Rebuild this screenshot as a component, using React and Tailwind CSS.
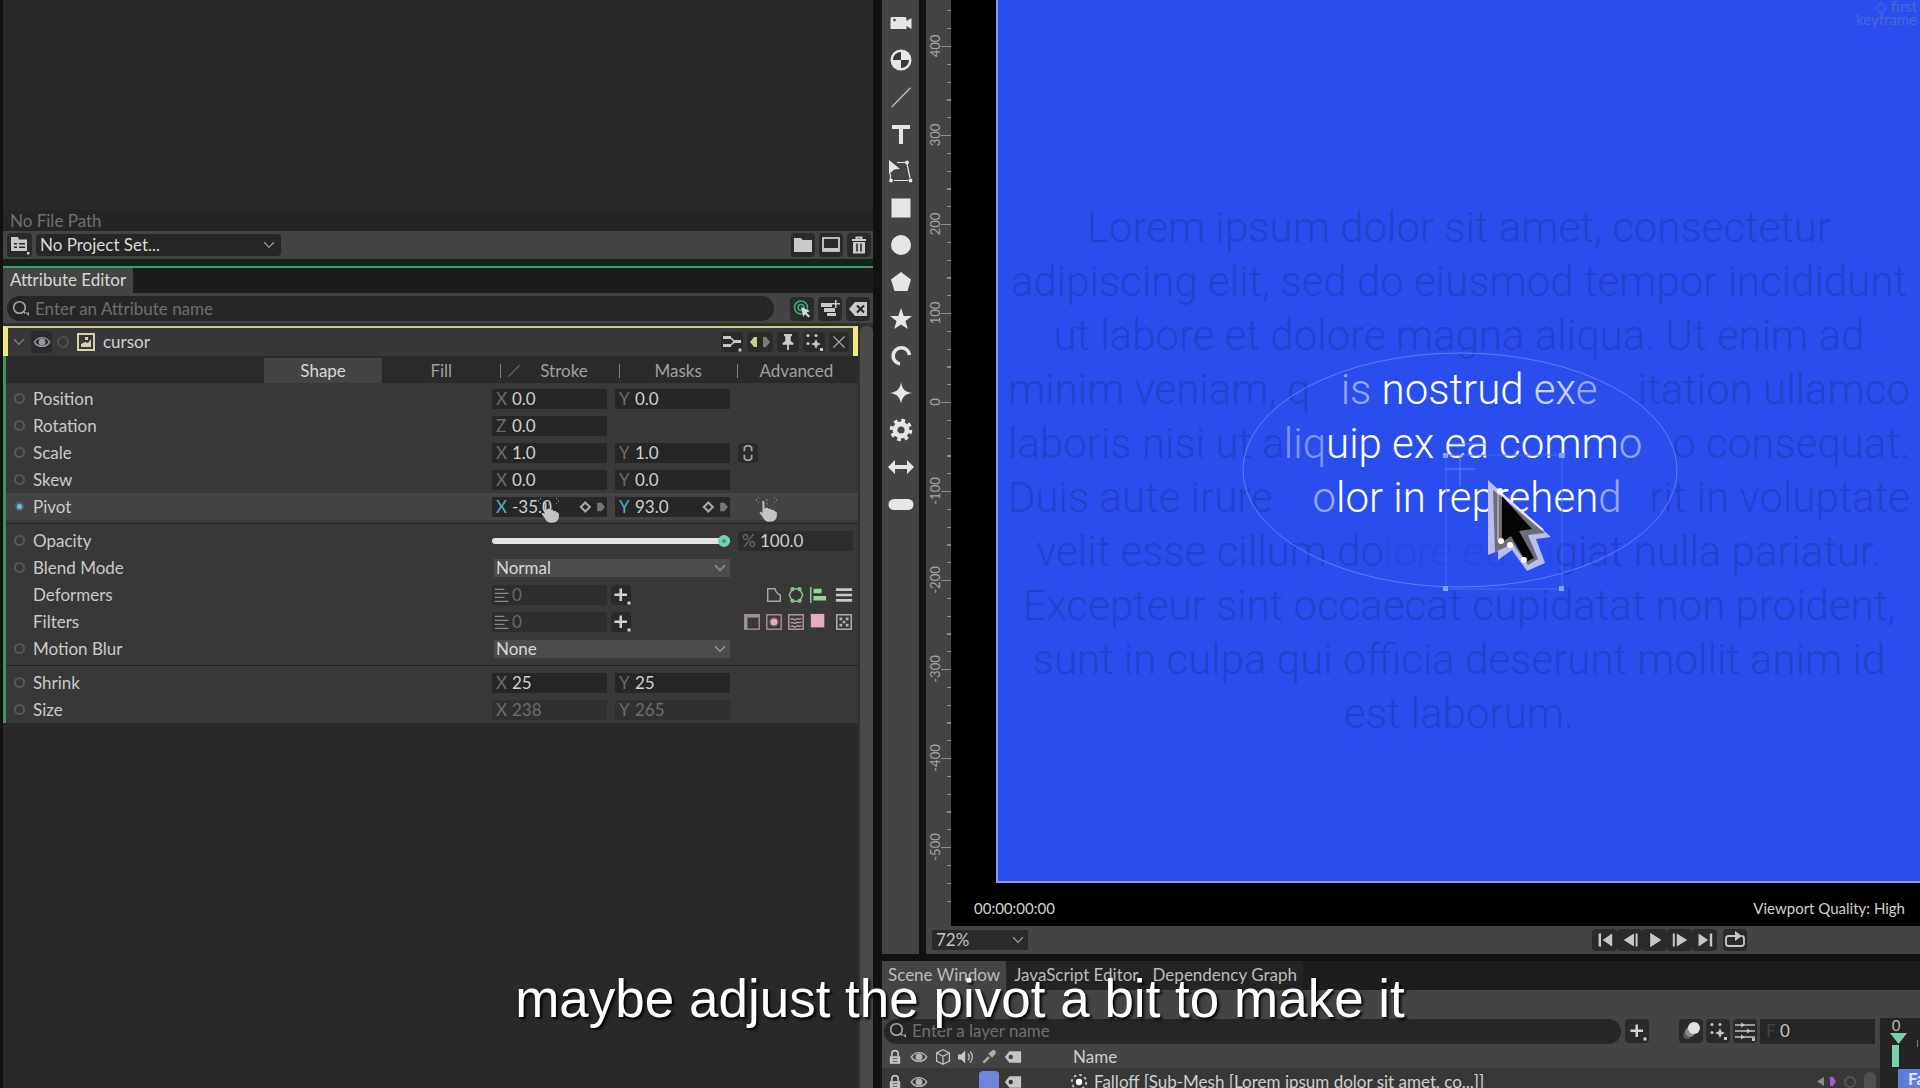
import clsx from 'clsx';

const FONT = "font-['Lato','Open_Sans',sans-serif]";

const Icon = ({ size = 20, className, children }) => (
  <svg
    width={size}
    height={size}
    viewBox="0 0 20 20"
    fill="none"
    stroke="currentColor"
    strokeWidth="1.6"
    className={clsx('shrink-0', className)}
    aria-hidden="true"
  >
    {children}
  </svg>
);

const Solid = ({ children, ...rest }) => (
  <Icon {...rest}>
    <g fill="currentColor" stroke="none">{children}</g>
  </Icon>
);

const Chevron = ({ className }) => (
  <Icon size={16} className={className}>
    <path d="M4 6.5l6 6.5 6-6.5" />
  </Icon>
);

const SearchIcon = () => (
  <Icon size={20} className="text-[#a8a8a8]">
    <circle cx="8.5" cy="8.5" r="5.8" />
    <path d="M12.8 13l1.5 1.5" />
    <path d="M14.5 13.5h3.5v3.5z" fill="currentColor" stroke="none" />
  </Icon>
);

const EyeIcon = ({ className = 'text-[#9a9a9a]' }) => (
  <Icon size={18} className={className}>
    <path d="M1.5 10c4-6.5 13-6.5 17 0-4 6.500-13 6.500-17 0z" />
    <circle cx="10" cy="10" r="3" fill="currentColor" />
  </Icon>
);

const LockIcon = () => (
  <Icon size={16} className="text-[#c6c6c6]">
    <path d="M6 9V6a4 4 0 0 1 8 0v3" strokeWidth="2" />
    <rect x="3.500" y="9" width="13" height="9.500" fill="currentColor" stroke="none" />
    <path d="M7 12h6M7 15.500h6" stroke="#444" strokeWidth="1" />
  </Icon>
);

const TagIcon = () => (
  <Solid size={18} className="text-[#c6c6c6]">
    <path fillRule="evenodd" d="M1 10l5-6.500h13v13H6zM7.500 7.500a2.500 2.500 0 1 0 0 5 2.500 2.500 0 0 0 0-5z" />
  </Solid>
);

const DotsIcon = () => (
  <Solid size={20} className="text-[#c6c6c6]">
    <circle cx="4" cy="3.500" r="1.500" />
    <circle cx="12" cy="3.500" r="1.500" />
    <circle cx="4" cy="11.500" r="1.500" />
    <path d="M12 7l1.500 3.500L17 12l-3.500 1.500L12 17l-1.500-3.500L7 12l3.500-1.500z" />
    <path d="M16 16h3v3h-3z" />
  </Solid>
);

const PlusIcon = () => (
  <Solid size={20} className="text-[#d2d2d2]">
    <path d="M8.500 3.500h2.500v5h5V11h-5v5H8.500v-5h-5V8.500h5z" />
    <path d="M16.500 16.500h3v3h-3z" />
  </Solid>
);

const HandIcon = ({ className }) => (
  <svg width="26" height="26" viewBox="0 0 26 26" className={clsx('shrink-0', className)} aria-hidden="true">
    <path d="M9 5c1 0 1.500.6 1.500 1.500V13l1.500-1.500 2 .5.5 1 2-.5 1 1.500 2-.3 1 1.500 2 .5.5 2c0 5-2 8-7 8-4 0-6-2-7.500-5l-3-4c.8-1.500 2-1 3 .5V6.500C7.500 5.600 8 5 9 5z" fill="#c4c4c4" />
    <path d="M5 1L2 4l3 3M20 1l3 3-3 3M13 3v6" fill="none" stroke="#8c8c8c" strokeDasharray="2 1.500" />
  </svg>
);

const IconButton = ({ label, className = 'w-6 h-6', children }) => (
  <button
    type="button"
    aria-label={label}
    className={clsx('flex items-center justify-center shrink-0 rounded-sm bg-[#2a2a2a]', className)}
  >
    {children}
  </button>
);

/* ---------- attribute editor ---------- */

const NumberField = ({ name, axis, value, tone = 'text-[#d0d0d0]', axisTone = 'text-[#6c6c6c]', bg = 'bg-[#262626]', keyed, children }) => (
  <label className={clsx('relative flex items-center w-[115px] h-5 shrink-0 pl-1', bg)}>
    <span className={clsx('w-4 shrink-0', axisTone)}>{axis}</span>
    <input
      aria-label={`${name} ${axis}`}
      defaultValue={value}
      className={clsx('w-full min-w-0 bg-transparent outline-none', tone, axis === '%' && 'pl-0.5')}
    />
    {keyed && (
      <Icon size={28} className="text-[#a8a8a8]">
        <path d="M4.500 6.800L7.700 10l-3.200 3.200L1.300 10z" strokeWidth="1.500" />
        <path d="M13 7h3l2.500 3-2.500 3h-3z" fill="#777" stroke="none" />
      </Icon>
    )}
    {children}
  </label>
);

const ListField = ({ name }) => (
  <div className="flex items-center gap-2">
    <label className="flex items-center w-[115px] h-5 pl-0.5 bg-[#2d2d2d]">
      <Icon size={16} className="mr-0.5 text-[#8a8a8a]">
        <path d="M1 3h12M1 8h17M1 13h12M1 18h17" />
      </Icon>
      <input aria-label={`${name} count`} defaultValue="0" className="w-full min-w-0 bg-transparent outline-none text-[#6a6a6a]" />
    </label>
    <IconButton label={`Add ${name}`} className="w-5 h-5 -ml-1">
      <PlusIcon />
    </IconButton>
  </div>
);

const Dropdown = ({ label, options, wrap, className, chevron }) => (
  <div className={clsx('relative', wrap)}>
    <select aria-label={label} className={clsx('block w-full appearance-none outline-none', className)}>
      {options.map((o) => (
        <option key={o}>{o}</option>
      ))}
    </select>
    <Chevron className={clsx('absolute pointer-events-none top-1/2 -translate-y-1/2', chevron)} />
  </div>
);

const Row = ({ label, dot = 'ring', active, children }) => (
  <div className={clsx('flex items-center h-[27px] pl-1.5 pr-[5px]', active && 'bg-[#434343]')}>
    <span className="flex items-center justify-center w-[15px] shrink-0">
      {dot === 'ring' && <span className="w-[11px] h-[11px] rounded-full border-2 border-[#585858]" />}
      {dot === 'key' && <span className="w-[9px] h-[9px] rounded-full border-2 border-[#4c6572] bg-[#6fc0e8]" />}
    </span>
    <span className="ml-1.5 text-[#cacaca]">{label}</span>
    <div className="flex items-center gap-2 ml-auto w-[361px]">{children}</div>
  </div>
);

const Separator = () => <div className="my-[3px] h-px bg-[#232323]" />;

const SECTION_TABS = [
  { label: 'Shape', active: true },
  { label: 'Fill' },
  { label: 'Stroke', bar: true, slash: true },
  { label: 'Masks', bar: true },
  { label: 'Advanced', bar: true },
];

const AttributeEditor = () => (
  <section className="flex flex-col flex-1 min-w-0">
    <div className="h-[210px] bg-[#292929]" />
    <div className="flex items-center h-[21px] pl-[7px] pt-px bg-[#252525] text-[#707070]">No File Path</div>
    <div className="flex items-center h-[28px] pl-1 pr-0.5 bg-[#444]">
      <IconButton label="Project" className="w-[25px] h-6">
        <Solid size={20} className="text-[#c8c8c8]">
          <path fillRule="evenodd" d="M1 2h7l1 2.500h8V16H1zM4 8v1.500h3V8zm0 3.500V13h3v-1.500zM9 8v1.500h6V8zm0 3.500V13h6v-1.500z" />
          <path d="M17 17h2.500v2.500H17z" />
        </Solid>
      </IconButton>
      <Dropdown
        label="Project set"
        options={['No Project Set...']}
        wrap="w-[245px] ml-1"
        className="h-[22px] rounded-sm pl-1 bg-[#262626] text-[#dadada]"
        chevron="right-1 text-[#9a9a9a]"
      />
      <div className="flex gap-1 ml-auto">
        <IconButton label="New folder">
          <Solid className="text-[#cacaca]"><path d="M1 3h7l1.500 2H19v12H1z" /></Solid>
        </IconButton>
        <IconButton label="Composition">
          <Icon className="text-[#cacaca]">
            <rect x="2" y="3" width="16" height="13" strokeWidth="1.800" />
            <path d="M2 14.500h16" strokeWidth="3" />
          </Icon>
        </IconButton>
        <IconButton label="Delete">
          <Icon className="text-[#cacaca]">
            <path d="M3 5h14M7.500 4V2.500h5V4" strokeWidth="2" />
            <path d="M4 7h12v11.500H4z" fill="currentColor" stroke="none" />
            <path d="M8 8.500v8M12 8.500v8" stroke="#2a2a2a" />
          </Icon>
        </IconButton>
      </div>
    </div>
    <div className="h-[7px] bg-[#10241a]" />
    <div className="flex h-[27px] border-t-2 border-[#4a9c6b] bg-[#1c1c1c]">
      <h2 className="flex items-center px-[7px] pb-0.5 bg-[#444] text-[#d6d6d6]">Attribute Editor</h2>
    </div>
    <div className="flex items-center h-8 pt-px pl-1 pr-[3px] border-b-2 border-[#303030] bg-[#444]">
      <label className="flex items-center flex-1 h-[25px] pl-1 rounded-full bg-[#262626]">
        <SearchIcon />
        <input
          aria-label="Search attributes"
          placeholder="Enter an Attribute name"
          className="flex-1 min-w-0 pl-1 bg-transparent outline-none placeholder:text-[#6e6e6e]"
        />
      </label>
      <div className="flex gap-1 ml-4">
        <IconButton label="Follow selection" className="w-6 h-6">
          <Icon>
            <g stroke="#41a873">
              <circle cx="9" cy="8.500" r="6.500" />
              <circle cx="9" cy="8.500" r="3" />
            </g>
            <path d="M9 8l9 4-3.500 1.500L18 17l-1.500 1.500L13 15l-1.500 3z" fill="#dcdcdc" stroke="none" />
          </Icon>
        </IconButton>
        <IconButton label="Add attribute">
          <Solid className="text-[#cacaca]">
            <path d="M1 4h11v4H1zM4 9h11v4H4zM7 14h9v3H7zM15 1h1.500v3H20v1.500h-3.500V9H15V5.500h-3V4h3z" />
          </Solid>
        </IconButton>
        <IconButton label="Clear">
          <Icon className="text-[#cacaca]">
            <path d="M1 10l6-7h12v14H7z" fill="currentColor" stroke="none" />
            <path d="M9 6.500l7 7M16 6.500l-7 7" stroke="#262626" strokeWidth="2" />
          </Icon>
        </IconButton>
      </div>
    </div>

    <div className="flex flex-1 min-h-0 bg-[#292929]">
      <div className="flex-1 min-w-0 pt-px">
        <div className="flex items-center h-[30px] border-t-2 border-x-[5px] border-t-[#cfcb8c] border-x-[#f0ea80] bg-[#37373a]">
          <Chevron className="ml-[3px] text-[#8d7f80]" />
          <span className="flex items-center justify-center w-[21px] h-[22px] ml-1 rounded-sm bg-[#29292e]"><EyeIcon /></span>
          <span className="w-3 h-3 ml-[5px] rounded-full border-2 border-[#505050]" />
          <Icon size={20} className="ml-[7px] text-[#d5d2ae]">
            <rect x="2" y="2" width="16" height="16" strokeWidth="2" />
            <path d="M5 15V12l4-2 3 1 3-4v8z" fill="currentColor" stroke="none" />
            <rect x="9" y="5" width="3" height="3" fill="currentColor" stroke="none" />
          </Icon>
          <span className="ml-[7px] text-[#d0d0d0]">cursor</span>
          <div className="flex items-center gap-1 ml-auto mr-1">
            <IconButton label="Connections" className="w-[22px] h-5">
              <Icon className="text-[#c6c6c6]">
                <path d="M1 5.500h8M1 13.500h8M11 9.500h8" strokeWidth="3" />
                <path d="M9 6l3 3M9 13l3-3" />
                <path d="M16.500 16.500h3v3h-3z" fill="currentColor" stroke="none" />
              </Icon>
            </IconButton>
            <IconButton label="Keyframe navigation" className="w-[26px] h-5">
              <svg width="22" height="12" viewBox="0 0 22 12" aria-hidden="true">
                <path d="M8 1v10H5L1 6l4-5z" fill="#cfd07c" />
                <path d="M14 1v10h3l4-5-4-5z" fill="#7c7c7c" />
              </svg>
            </IconButton>
            <IconButton label="Pin" className="w-[22px] h-5">
              <Solid size={18} className="text-[#cacaca]">
                <path d="M5.500 1h9v2l-1.500 1v5l3 2v2h-5v6H9v-6H4v-2l3-2V4L5.500 3z" />
              </Solid>
            </IconButton>
            <IconButton label="Presets" className="w-[22px] h-5"><DotsIcon /></IconButton>
            <IconButton label="Close" className="w-5 h-5">
              <Icon size={16} className="text-[#b0b0b0]"><path d="M3 3l14 14M17 3L3 17" /></Icon>
            </IconButton>
          </div>
        </div>

        <div className="border-l-[3px] border-[#48905f] bg-[#383838]">
          <div role="tablist" className="flex h-[27px] pt-0.5 pl-[258px] pr-[3px] bg-[#2a2a2a]">
            {SECTION_TABS.map((tab) => (
              <button
                key={tab.label}
                type="button"
                role="tab"
                aria-selected={!!tab.active}
                className={clsx(
                  'flex items-center flex-1',
                  tab.active ? 'bg-[#444] text-[#d8d8d8]' : 'text-[#a0a0a0]'
                )}
              >
                {tab.bar && <span className="w-px h-3.5 bg-[#808080]" />}
                {tab.slash && (
                  <Icon size={14} className="ml-1.5 -mr-3 text-[#7d6466]"><path d="M2 18L18 2" /></Icon>
                )}
                <span className="flex-1">{tab.label}</span>
              </button>
            ))}
          </div>

          <div className="pt-0.5">
            <Row label="Position">
              <NumberField name="Position" axis="X" value="0.0" />
              <NumberField name="Position" axis="Y" value="0.0" />
            </Row>
            <Row label="Rotation">
              <NumberField name="Rotation" axis="Z" value="0.0" />
            </Row>
            <Row label="Scale">
              <NumberField name="Scale" axis="X" value="1.0" />
              <NumberField name="Scale" axis="Y" value="1.0" />
              <IconButton label="Link scale" className="w-5 h-5">
                <Icon size={18} className="text-[#a4a4a4]">
                  <path d="M6 8V4l2-2h4l2 2v4M6 12v4l2 2h4l2-2v-4" strokeWidth="2" />
                </Icon>
              </IconButton>
            </Row>
            <Row label="Skew">
              <NumberField name="Skew" axis="X" value="0.0" />
              <NumberField name="Skew" axis="Y" value="0.0" />
            </Row>
            <Row label="Pivot" dot="key" active>
              <NumberField name="Pivot" axis="X" value="-35.0" axisTone="text-[#4fb0c8]" keyed>
                <HandIcon className="absolute left-11 top-0" />
              </NumberField>
              <NumberField name="Pivot" axis="Y" value="93.0" axisTone="text-[#4fb0c8]" keyed />
              <HandIcon className="mt-1 ml-4" />
            </Row>
          </div>
          <Separator />
          <Row label="Opacity">
            <input
              type="range"
              aria-label="Opacity"
              defaultValue="100"
              className="w-[238px] h-3 appearance-none bg-transparent [&::-webkit-slider-runnable-track]:h-1.5 [&::-webkit-slider-runnable-track]:rounded-full [&::-webkit-slider-runnable-track]:bg-[#e2e2e2] [&::-webkit-slider-thumb]:appearance-none [&::-webkit-slider-thumb]:-mt-[3px] [&::-webkit-slider-thumb]:w-3 [&::-webkit-slider-thumb]:h-3 [&::-webkit-slider-thumb]:rounded-full [&::-webkit-slider-thumb]:border-4 [&::-webkit-slider-thumb]:border-[#6fd3b0] [&::-webkit-slider-thumb]:bg-[#2f9c7b]"
            />
            <NumberField name="Opacity" axis="%" value="100.0" bg="bg-[#2c2c2c]" />
          </Row>
          <Row label="Blend Mode">
            <Dropdown
              label="Blend Mode"
              options={['Normal']}
              wrap="w-[236px] ml-0.5"
              className="h-[18px] pl-0.5 leading-[18px] bg-[#4c4c4c] text-[#d8d8d8]"
              chevron="right-0.5 text-[#9c9c9c]"
            />
          </Row>
          <Row label="Deformers" dot="none">
            <ListField name="Deformers" />
            <div className="flex items-center gap-1 ml-auto">
              <Icon size={18} className="text-[#a8a8a8]"><path d="M3 3h8c1 4 3 6 6 7v7H3z" /></Icon>
              <Icon size={18} className="text-[#8cc48c]">
                <path d="M6 3h8l3.500 7L14 17H6L2.500 10z" />
                <circle cx="6" cy="3.500" r="1.500" /><circle cx="14" cy="3.500" r="1.500" />
                <circle cx="6" cy="16.500" r="1.500" /><circle cx="14" cy="16.500" r="1.500" />
              </Icon>
              <Icon size={18} className="text-[#97d597]">
                <path d="M2 1v18" strokeWidth="1.500" />
                <path d="M5 3h9v5H5zM5 11h14v5H5z" fill="currentColor" stroke="none" />
              </Icon>
              <Icon size={18} className="ml-1 text-[#c4ccc4]"><path d="M1 4h18M1 10h18M1 16h18" strokeWidth="3" /></Icon>
            </div>
          </Row>
          <Row label="Filters" dot="none">
            <ListField name="Filters" />
            <div className="flex items-center gap-1 ml-auto">
              <Icon size={18} className="text-[#a09098]"><rect x="2" y="2" width="16" height="16" /><path d="M2 3.500h16M3.500 2v16" strokeWidth="3" /></Icon>
              <Icon size={18} className="text-[#b58a98]"><rect x="2" y="2" width="16" height="16" /><circle cx="10" cy="10" r="4.500" fill="#e3b3c2" stroke="#8a5c6a" /></Icon>
              <Icon size={18} className="text-[#b79aa4]">
                <rect x="2" y="2" width="16" height="16" />
                <path d="M4 7c3-2 4 2 6 0s4 1 6-1M4 11c3-2 4 2 6 0s4 1 6-1M4 15c3-2 4 2 6 0s4 1 6-1" />
              </Icon>
              <Solid size={18} className="text-[#e4adba]"><rect x="2" y="1" width="15" height="15" /></Solid>
              <Icon size={18} className="ml-1 text-[#b4b4b4]">
                <rect x="2" y="2" width="16" height="16" />
                <path d="M5 5h3v3H5zM12 5h3v3h-3zM8.500 8.500h3v3h-3zM5 12h3v3H5zM12 12h3v3h-3z" fill="currentColor" stroke="none" />
              </Icon>
            </div>
          </Row>
          <Row label="Motion Blur">
            <Dropdown
              label="Motion Blur"
              options={['None']}
              wrap="w-[236px] ml-0.5"
              className="h-[18px] pl-0.5 leading-[18px] bg-[#4c4c4c] text-[#d8d8d8]"
              chevron="right-0.5 text-[#9c9c9c]"
            />
          </Row>
          <Separator />
          <Row label="Shrink">
            <NumberField name="Shrink" axis="X" value="25" />
            <NumberField name="Shrink" axis="Y" value="25" />
          </Row>
          <Row label="Size">
            <NumberField name="Size" axis="X" value="238" tone="text-[#6c6c6c]" bg="bg-[#303030]" />
            <NumberField name="Size" axis="Y" value="265" tone="text-[#6c6c6c]" bg="bg-[#303030]" />
          </Row>
        </div>
      </div>
      <div className="w-[15px] shrink-0 bg-[#303030] pt-px">
        <div className="h-full ml-0.5 rounded-t-md bg-[#4a4a4a]" />
      </div>
    </div>
  </section>
);

/* ---------- tool strip ---------- */

const TOOLS = [
  ['Camera', <><path d="M0 5c0-1.500 1-2 2-2h12c1 0 2 .5 2 2v2l5-3v11l-5-3v3H0z" transform="translate(-.5 1)" /><circle cx="3.500" cy="7" r="1.300" fill="#444" /></>],
  ['Null', <><circle cx="10" cy="10" r="10.500" /><path d="M10 10V2A8 8 0 0 0 2 10zM10 10v8a8 8 0 0 0 8-8z" fill="#383838" /></>],
  ['Line', <path d="M.5 19.500L19 .5l.7.700L1.200 20.200z" stroke="currentColor" strokeWidth=".4" opacity=".8" />],
  ['Text', <path d="M1 1h18v4h-7v15H8V5H1z" />],
  ['Edit path', <><path d="M-2-1l11 9-6 .5-5 5z" /><circle cx="16" cy="1.500" r="1.900" /><circle cx="19.500" cy="19.500" r="1.900" /><circle cx="0" cy="19.500" r="1.900" /><path d="M6 1.500h8M3 19.500h14M16 3l3 14M-.5 13v5" stroke="currentColor" strokeWidth="1.200" /></>],
  ['Rectangle', <rect x=".5" y=".5" width="19" height="19" />],
  ['Ellipse', <circle cx="10" cy="10" r="10" />],
  ['Polygon', <path d="M10 0l10 7.500L16.500 19h-13L0 7.500z" />],
  ['Star', <path d="M10-1l2.700 8H21l-6.500 5 2.300 8L10 15.500 3.200 20l2.300-8L-1 7h8.300z" />],
  ['Arc', <path d="M9 18A8.200 8.200 0 1 1 18.500 9" fill="none" stroke="currentColor" strokeWidth="3.600" />],
  ['Super ellipse', <path d="M10-1c1 7 4 10 11 11-7 1-10 4-11 11-1-7-4-10-11-11 7-1 10-4 11-11z" />],
  ['Cogwheel', <><circle cx="10" cy="10" r="6" fill="none" stroke="currentColor" strokeWidth="4.800" /><circle cx="10" cy="10" r="9.500" fill="none" stroke="currentColor" strokeWidth="3.500" strokeDasharray="3.730" /></>],
  ['Arrow', <path d="M-3 10l7-7v5h12V3l7 7-7 7v-5H4v5z" />],
  ['Capsule', <rect x="-2.500" y="5" width="25" height="11" rx="5.500" />],
];

const ToolStrip = () => (
  <nav aria-label="Shapes" className="flex flex-col items-center w-[37px] shrink-0 pt-1 bg-[#444]">
    {TOOLS.map(([name, shape]) => (
      <button key={name} type="button" aria-label={name} className="flex items-center justify-center w-full h-[37px] text-[#e6e6e6]">
        <Solid size={20} className="overflow-visible">{shape}</Solid>
      </button>
    ))}
  </nav>
);

/* ---------- viewport ---------- */

const RULER_ZERO = 402;
const RULER_STEP = 89;
const RULER_MARKS = [400, 300, 200, 100, 0, -100, -200, -300, -400, -500];

const Ruler = () => (
  <svg width="25" height="100%" className={clsx('shrink-0 bg-[#444]', FONT)} aria-label="Vertical ruler">
    {RULER_MARKS.map((mark) => {
      const y = Math.round(RULER_ZERO - (mark / 100) * RULER_STEP);
      return (
        <g key={mark} stroke="#8b8b8b">
          <path d={`M15 ${y}.5h10`} />
          {[-36, -18, 18, 36, 54].map((d) => (
            <path key={d} d={`M21 ${y + d}.5h4`} />
          ))}
          <text
            stroke="none"
            fill="#a6a6a6"
            fontSize="13"
            textAnchor="middle"
            transform={`translate(14 ${y}) rotate(-90)`}
          >
            {mark}
          </text>
        </g>
      );
    })}
  </svg>
);

const FocusLine = ({ left, right, inset, children }) => (
  <div className="grid grid-cols-[minmax(0,1fr)_auto_minmax(0,1fr)] px-2.5">
    <span className="text-left">{left}</span>
    <span className={clsx('text-white', inset)}>{children}</span>
    <span className="flex justify-end">{right}</span>
  </div>
);

const Canvas = () => (
  <div className="relative flex-1 min-h-0 ml-[45px] overflow-hidden border-l-2 border-b-2 border-[#8e9be0] bg-[#294eed]">
    <p className="absolute right-[3px] top-0 text-right text-[15px] leading-[13px] text-[#4a68d4]">
      ◇ first
      <br />
      keyframe
    </p>
    <div className="pt-[201px] text-center text-[42px] leading-[54px] font-light whitespace-nowrap text-[#2242cd] font-['Roboto',sans-serif]">
      <div>Lorem ipsum dolor sit amet, consectetur</div>
      <div>adipiscing elit, sed do eiusmod tempor incididunt</div>
      <div>ut labore et dolore magna aliqua. Ut enim ad</div>
      <FocusLine left="minim veniam, q" right="itation ullamco" inset="pl-5">
        <span className="opacity-50">is</span> nostrud <span className="opacity-75">ex</span>
        <span className="opacity-50">e</span>
      </FocusLine>
      <FocusLine left="laboris nisi ut a" right="o consequat." inset="pl-2">
        <span className="opacity-40">liq</span>uip ex ea comm<span className="opacity-50">o</span>
      </FocusLine>
      <FocusLine left="Duis aute irure" right="rit in voluptate" inset="pl-4">
        <span className="opacity-50">o</span>lor in reprehen<span className="opacity-50">d</span>
      </FocusLine>
      <div>
        velit esse cillum do<span className="opacity-40">lore eu fu</span>giat nulla pariatur.
      </div>
      <div>Excepteur sint occaecat cupidatat non proident,</div>
      <div>sunt in culpa qui officia deserunt mollit anim id</div>
      <div>est laborum.</div>
    </div>

    {/* falloff ellipse, selection box and the cursor artwork */}
    <svg
      width="450"
      height="250"
      viewBox="0 0 450 250"
      className="absolute top-[348px] left-1/2 -translate-x-1/2"
      fill="none"
      aria-hidden="true"
    >
      <ellipse cx="226" cy="122" rx="217" ry="117" stroke="#5f7ef6" />
      <path d="M212 107h116v134H212z" stroke="#4468f2" />
      <g fill="#86a2ff">
        <path d="M209 238h5v5h-5zM325 238h5v5h-5zM209 105h5v5h-5zM325 105h5v5h-5z" />
      </g>
      <path d="M226 107v32M211 121h30M215 96h36" stroke="#6485fa" />
      <path d="M254 132l63 57-15 2 9 24-18 8-15-21-14 10v-9l-10 4z" fill="#b9bdf0" />
      <path d="M259 142l52 43-17 2 10 24-10 6-15-21-18 8z" fill="#6d6d78" />
      <path d="M263 142l46 40" stroke="#e8e8ff" strokeWidth="2" />
      <path d="M268 148l30 33-13 2 15 27-8 4-15-26-9 6z" fill="#050505" />
      <path d="M264 146v46" stroke="#d8d8f0" />
      <circle cx="266" cy="143" r="3" fill="#fff" />
      <circle cx="267" cy="193" r="3" fill="#fff" />
      <circle cx="276" cy="197" r="3" fill="#fff" />
      <circle cx="290" cy="212" r="3" fill="#fff" />
    </svg>
  </div>
);

const TRANSPORT = [
  ['Go to start', 'M2 2h3v16H2zM19 2v16L7 10z'],
  ['Previous frame', 'M17 2h2.500v16H17zM15 2v16L2 10z'],
  ['Play', 'M4 1v18l14-9z'],
  ['Next frame', 'M1 2h2.500v16H1zM6 2v16l13-8z'],
  ['Go to end', 'M2 2v16l12-8zM16 2h3v16h-3z'],
];

const Viewport = () => (
  <div className="flex flex-col flex-1 min-w-0">
    <div className="flex flex-1 min-h-0">
      <Ruler />
      <div className="flex flex-col flex-1 min-w-0 bg-black">
        <Canvas />
        <div className="flex items-center justify-between h-[43px] pt-1.5 pl-[23px] pr-[15px] text-[15px] text-[#d2d2d2]">
          <span>00:00:00:00</span>
          <span>Viewport Quality: High</span>
        </div>
      </div>
    </div>
    <div className="flex items-center h-7 pl-1.5 bg-[#444]">
      <Dropdown
        label="Zoom"
        options={['72%']}
        wrap="w-24"
        className="h-5 pl-1 bg-[#2a2a2a] text-[#c6c6c6]"
        chevron="right-0.5 text-[#9c9c9c]"
      />
      <div className="flex ml-auto mr-[173px]">
        {TRANSPORT.map(([name, d]) => (
          <IconButton key={name} label={name} className="w-[25px] h-[22px]">
            <Solid size={16} className="text-[#c8c8c8]"><path d={d} /></Solid>
          </IconButton>
        ))}
        <IconButton label="Loop" className="w-6 h-[22px] ml-[6px]">
          <Icon size={20} className="text-[#c8c8c8]">
            <path d="M6 6H3.500C2 6 1 7 1 8.500v5C1 15 2 16 3.500 16h13c1.500 0 2.500-1 2.500-2.500v-5C19 7 18 6 16.500 6M4 6h7" strokeWidth="1.800" />
            <path d="M10 1l7 5-7 5z" fill="currentColor" stroke="none" />
          </Icon>
        </IconButton>
      </div>
    </div>
  </div>
);

/* ---------- scene window ---------- */

const SceneWindow = () => (
  <section className="flex flex-col h-[127px] shrink-0 overflow-hidden bg-[#444]">
    <div role="tablist" className="flex h-[29px] shrink-0 bg-[#1d1d1d] text-[#bcbcbc]">
      <button type="button" role="tab" aria-selected="true" className="px-1.5 pb-0.5 bg-[#444]">Scene Window</button>
      <button type="button" role="tab" aria-selected="false" className="pl-2 pr-1.5 pb-0.5 bg-[#242424]">JavaScript Editor</button>
      <button type="button" role="tab" aria-selected="false" className="pl-2 pr-1.5 pb-0.5 bg-[#242424]">Dependency Graph</button>
    </div>
    <div className="h-7 shrink-0" />
    <div className="flex flex-1">
      <div className="flex flex-col flex-1 min-w-0">
        <div className="flex items-center h-[26px] shrink-0 pl-0.5 pr-[5px]">
          <label className="flex items-center flex-1 h-[25px] pl-1 rounded-full bg-[#262626]">
            <SearchIcon />
            <input
              aria-label="Search layers"
              placeholder="Enter a layer name"
              className="flex-1 min-w-0 pl-1 bg-transparent outline-none placeholder:text-[#6e6e6e]"
            />
          </label>
          <IconButton label="Add layer" className="w-6 h-6 ml-1"><PlusIcon /></IconButton>
          <div className="flex gap-[3px] ml-[30px]">
            <IconButton label="Motion blur">
              <Solid><circle cx="6" cy="14" r="4" fill="#555" /><circle cx="9" cy="11" r="5" fill="#8a8a8a" /><circle cx="13" cy="7" r="6" fill="#e0e0e0" /></Solid>
            </IconButton>
            <IconButton label="Layer options"><DotsIcon /></IconButton>
            <IconButton label="Filters">
              <Icon className="text-[#c0c0c0]">
                <path d="M0 4h20M0 10h20M0 16h20" />
                <path d="M6 1.500l4 2.500-4 2.500zM12 7.500l4 2.500-4 2.500zM6 13.500l4 2.500-4 2.500z" fill="currentColor" stroke="none" />
                <path d="M17 17h3v3h-3z" fill="currentColor" stroke="none" />
              </Icon>
            </IconButton>
          </div>
          <label className="flex items-center w-[115px] h-[25px] ml-[3px] pl-1.5 bg-[#262626]">
            <span className="w-4 text-[#444]">F</span>
            <input aria-label="Current frame" defaultValue="0" className="w-full min-w-0 bg-transparent outline-none text-[#c6c6c6]" />
          </label>
        </div>
        <div className="flex items-center h-6 shrink-0 pt-px pl-[5px] text-[#d0d0d0]">
          <div className="flex items-center gap-[7px]">
            <LockIcon />
            <EyeIcon className="text-[#b4b4b4]" />
            <Icon size={16} className="text-[#c0c0c0]"><path d="M10 1l8 4v10l-8 4-8-4V5zM2 5l8 4 8-4M10 9v10" /></Icon>
            <Icon size={16} className="text-[#c6c6c6]">
              <path d="M0 7h4l5-5v16l-5-5H0z" fill="currentColor" stroke="none" />
              <path d="M12.500 6c2 2 2 6 0 8M15 3c4 4 4 10 0 14" />
            </Icon>
            <Icon size={16} className="text-[#b0b0b0]">
              <path d="M3 17l7-7" strokeWidth="3" />
              <path d="M9 6l5 5 4-5c2-3-2-6-4-4z" fill="currentColor" stroke="none" />
            </Icon>
            <TagIcon />
          </div>
          <span className="ml-[51px]">Name</span>
        </div>
        <div className="flex items-center h-[27px] shrink-0 pl-[5px] pr-1 bg-[#383838] text-[#d0d0d0]">
          <LockIcon />
          <EyeIcon className="ml-[7px] text-[#b4b4b4]" />
          <span className="w-5 h-[22px] ml-[51px] rounded-t-sm bg-[#6d86da]" />
          <span className="ml-[5px]"><TagIcon /></span>
          <Icon size={18} className="ml-12 text-[#c6c6c6]">
            <circle cx="10" cy="10" r="3.500" fill="#fff" stroke="none" />
            <circle cx="10" cy="10" r="8" strokeDasharray="3 3.280" strokeWidth="2" />
          </Icon>
          <span className="ml-1.5 whitespace-nowrap">Falloff [Sub-Mesh [Lorem ipsum dolor sit amet, co...]]</span>
          <Icon size={20} className="ml-auto"><path d="M8 5v9l-7-4.500z" fill="#888" stroke="none" /><path d="M14 5v9h3l3-4.500L17 5z" fill="#a65bd0" stroke="none" /></Icon>
          <span className="w-3 h-3 ml-2 rounded-full border-2 border-[#555]" />
          <span className="self-start w-3 h-6 mt-1 ml-2 rounded-t-md bg-[#505050]" />
        </div>
      </div>
      {/* timeline */}
      <div className="flex flex-col w-10 shrink-0 bg-[#242424]">
        <div className="h-[49px] pl-2.5">
          <svg width="30" height="50" aria-label="Playhead">
            <text x="6" y="13" fontSize="15" textAnchor="middle" fill="#b8b8b8">0</text>
            <path d="M0 15h17l-8.500 11z" fill="#79cfa9" />
            <path d="M2 27h7v22H2z" fill="#79cfa9" />
            <path d="M27.500 22v7" stroke="#777" />
          </svg>
        </div>
        <div className="flex h-[27px] mt-0.5 ml-[18px] pl-2.5 overflow-hidden bg-[#5f7ddb] text-[#e2e8ff] font-bold">Falloff</div>
      </div>
    </div>
  </section>
);

const App = () => (
  <div
    className={clsx(
      'relative grid grid-cols-[882fr_1038fr] h-screen overflow-hidden bg-[#121212] text-[17px] leading-5',
      FONT
    )}
  >
    <div className="flex min-w-0 pl-[3px] pr-[9px]">
      <AttributeEditor />
    </div>
    <div className="flex flex-col min-w-0">
      <div className="flex flex-1 min-h-0 gap-[7px] pb-[7px]">
        <div className="flex">
          <ToolStrip />
        </div>
        <Viewport />
      </div>
      <SceneWindow />
    </div>

    <p className="absolute inset-x-0 bottom-[59px] text-center text-[53px] leading-[60px] text-white font-['Liberation_Sans',Arial,sans-serif] [text-shadow:2px_2px_3px_#000]">
      maybe adjust the pivot a bit to make it
    </p>
  </div>
);

export default App;
